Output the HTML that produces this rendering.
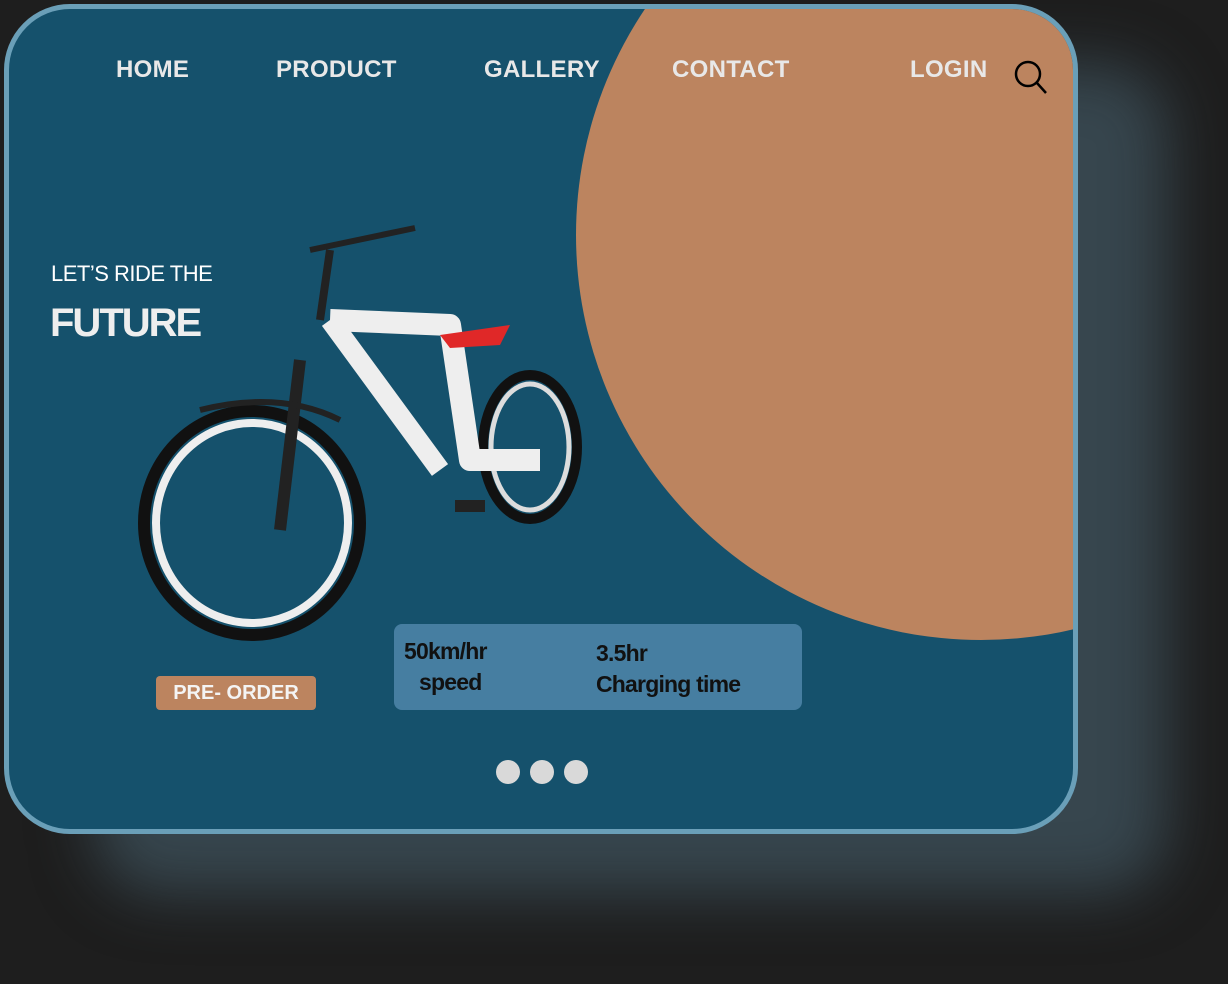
<!DOCTYPE html>
<html><head><style>
html,body{margin:0;padding:0;background:#1e1e1e;width:1228px;height:984px;overflow:hidden;font-family:"Liberation Sans",sans-serif}
.card{position:absolute;left:4px;top:4px;width:1064px;height:820px;border:5px solid #6a9fb8;border-radius:66px;background:#15516c;overflow:hidden;box-shadow:90px 60px 60px rgba(80,110,125,0.5)}
.circle{position:absolute;left:567px;top:-179px;width:810px;height:810px;border-radius:50%;background:#bc845f}
.nav{position:absolute;top:47px;font-weight:bold;font-size:24px;color:#e8e8e8;letter-spacing:0.3px}
.t1{position:absolute;left:42px;top:252px;color:#fff;font-size:22px;letter-spacing:-0.5px}
.t2{position:absolute;left:41px;top:292px;color:#eee;font-size:40px;font-weight:bold;letter-spacing:-2px}
.btn{position:absolute;left:147px;top:667px;width:160px;height:34px;background:#bc845f;border-radius:4px;color:#f4f4f4;font-weight:bold;font-size:20px;text-align:center;line-height:35px}
.stats{position:absolute;left:385px;top:615px;width:408px;height:86px;background:#467ea1;border-radius:8px;color:#111;font-weight:bold;font-size:23px;letter-spacing:-0.8px}
.dot{position:absolute;top:751px;width:24px;height:24px;border-radius:50%;background:#d9d9d9}
</style></head><body>
<div class="card">
<div class="circle"></div>
<div class="nav" style="left:107px">HOME</div>
<div class="nav" style="left:267px">PRODUCT</div>
<div class="nav" style="left:475px">GALLERY</div>
<div class="nav" style="left:663px">CONTACT</div>
<div class="nav" style="left:901px">LOGIN</div>
<svg style="position:absolute;left:1002px;top:48px" width="40" height="40"><circle cx="17" cy="17" r="12" fill="none" stroke="#000" stroke-width="2.5"/><line x1="26" y1="26" x2="35" y2="36" stroke="#000" stroke-width="2.5"/></svg>
<div class="t1">LET’S RIDE THE</div>
<div class="t2">FUTURE</div>
<svg style="position:absolute;left:125px;top:200px" width="460" height="440" viewBox="125 200 460 440">
<g transform="translate(-9,-9)">
<ellipse cx="252" cy="523" rx="108" ry="112" fill="none" stroke="#111" stroke-width="12"/>
<ellipse cx="252" cy="523" rx="96" ry="100" fill="none" stroke="#eee" stroke-width="8"/>
<ellipse cx="530" cy="447" rx="47" ry="72" fill="none" stroke="#111" stroke-width="10"/>
<ellipse cx="530" cy="447" rx="39" ry="63" fill="none" stroke="#ddd" stroke-width="5"/>
<path d="M300 360 L280 530" stroke="#222" stroke-width="12"/>
<path d="M330 320 L450 325 L470 460 L540 460" stroke="#eee" stroke-width="22" fill="none" stroke-linejoin="round"/>
<path d="M330 320 L440 470" stroke="#eee" stroke-width="20"/>
<path d="M440 335 L510 325 L500 345 L450 348Z" fill="#e02828"/>
<path d="M310 250 L415 228" stroke="#222" stroke-width="6"/>
<path d="M330 250 L320 320" stroke="#222" stroke-width="8"/>
<path d="M200 410 Q280 390 340 420" stroke="#222" stroke-width="6" fill="none"/>
<rect x="455" y="500" width="30" height="12" fill="#222"/>
</g>
</svg>
<div class="btn">PRE- ORDER</div>
<div class="stats">
<div style="position:absolute;left:10px;top:14px">50km/hr</div>
<div style="position:absolute;left:25px;top:45px">speed</div>
<div style="position:absolute;left:202px;top:16px">3.5hr</div>
<div style="position:absolute;left:202px;top:47px">Charging time</div>
</div>
<div class="dot" style="left:487px"></div>
<div class="dot" style="left:521px"></div>
<div class="dot" style="left:555px"></div>
</div>
</body></html>
